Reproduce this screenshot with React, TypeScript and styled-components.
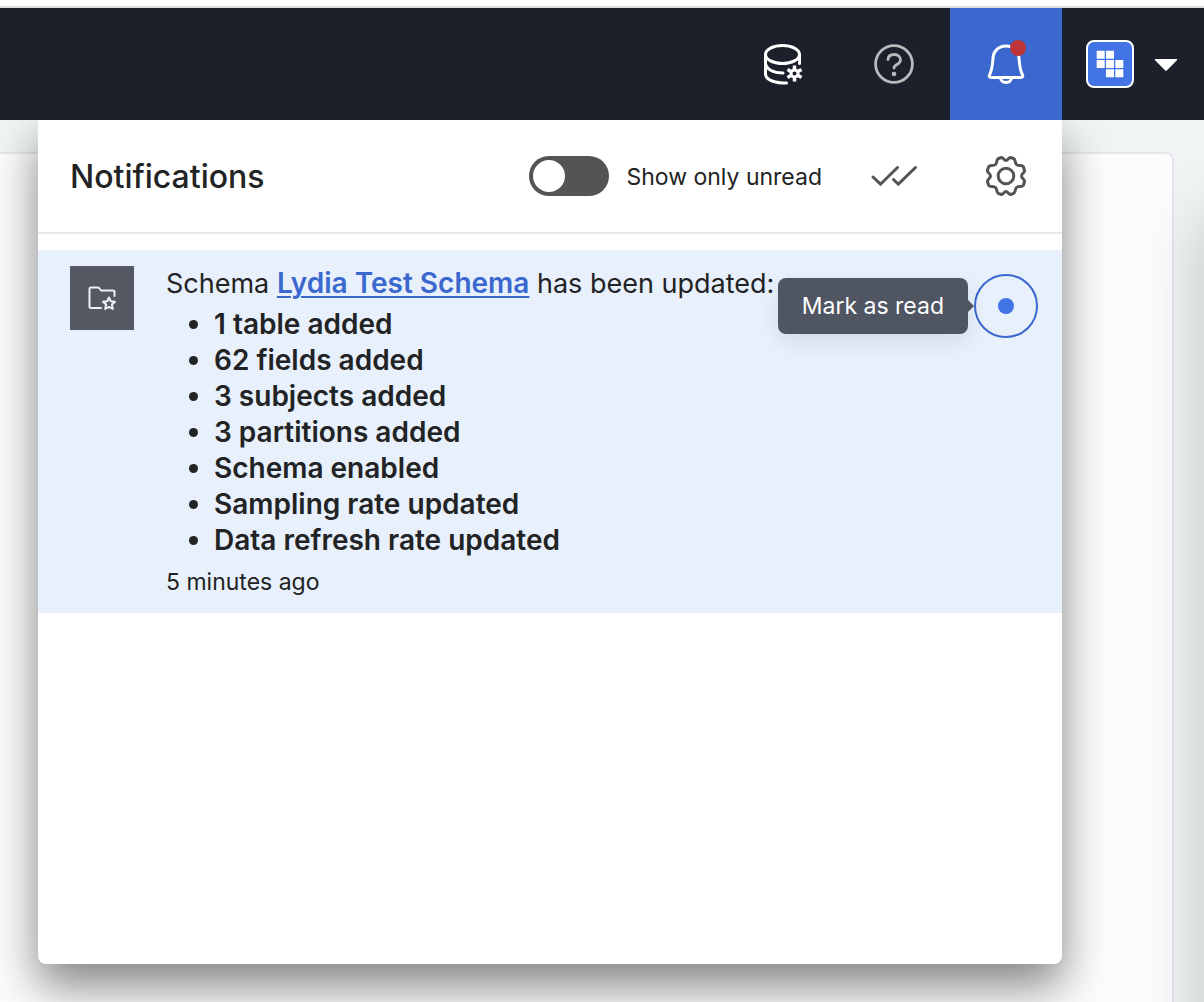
import React, { useState } from "react";
import styled, { createGlobalStyle, css } from "styled-components";

const GlobalStyle = createGlobalStyle`
  *, *::before, *::after { box-sizing: border-box; }
  html, body, #root { height: 100%; }
  body {
    margin: 0;
    overflow: hidden;
    background: #f0f4f5;
    color: #222324;
    font-family: Inter, "Liberation Sans", sans-serif;
  }
  button { font: inherit; border: 0; padding: 0; background: none; color: inherit; cursor: pointer; }
`;

const Page = styled.div`
  display: flex;
  flex-direction: column;
  height: 100%;
  border-top: 6px solid #ffffff;
`;

const TopBar = styled.header`
  position: relative;
  z-index: 2;
  display: flex;
  justify-content: flex-end;
  height: 114px;
  flex: none;
  border-top: 2px solid #dde2df;
  background: #1c202a;
`;

const NavButton = styled.button<{ $active?: boolean; $muted?: boolean }>`
  position: relative;
  display: grid;
  place-items: center;
  width: 112px;
  color: ${(p) => (p.$muted ? "#b9babd" : "#ffffff")};
  ${(p) => p.$active && css`background: #3b68ce;`}
`;

const Badge = styled.span`
  position: absolute;
  top: 32px;
  right: 36px;
  width: 16px;
  height: 16px;
  border-radius: 50%;
  background: #bf3438;
`;

const AccountButton = styled.button`
  display: flex;
  align-items: center;
  gap: 20px;
  padding: 0 26px 0 24px;
`;

const Logo = styled.span`
  display: grid;
  place-items: center;
  width: 48px;
  height: 48px;
  border: 2px solid #ffffff;
  border-radius: 8px;
  background: #4274e6;
`;

const Content = styled.main`
  position: relative;
  flex: 1;
  display: flex;
  padding: 32px 30px 0 0;
  overflow: hidden;

  &::before {
    content: "";
    position: absolute;
    top: 100px;
    bottom: -100px;
    left: 100%;
    width: 200px;
    box-shadow: 0 0 64px rgba(0, 0, 0, 0.2);
    pointer-events: none;
  }
`;

const Sheet = styled.section`
  flex: 1;
  border: 2px solid #e5e5ee;
  border-width: 2px 2px 0 0;
  border-radius: 0 8px 0 0;
  background: #fcfcfc;
`;

const Panel = styled.section`
  position: absolute;
  top: 0;
  right: 142px;
  left: 38px;
  bottom: 38px;
  border-radius: 0 0 8px 8px;
  background: #ffffff;
  box-shadow: 0 22px 46px rgba(0, 0, 0, 0.48);
`;

const PanelHeader = styled.header`
  display: flex;
  align-items: center;
  height: 114px;
  padding: 0 36px 0 32px;
  border-bottom: 2px solid #e7e7ee;
`;

const Title = styled.h2`
  flex: 1;
  margin: 0;
  padding-top: 2px;
  font-size: 32px;
  font-weight: 500;
  line-height: 40px;
`;

const ToggleLabel = styled.label`
  display: flex;
  align-items: center;
  gap: 17px;
  font-size: 23px;
  line-height: 32px;
  cursor: pointer;
`;

const ToggleText = styled.span`
  padding-top: 2px;
`;

const Toggle = styled.input`
  appearance: none;
  width: 80px;
  height: 40px;
  margin: 0;
  padding: 4px;
  border-radius: 20px;
  background: #545454;
  cursor: pointer;

  &::before {
    content: "";
    display: block;
    width: 32px;
    height: 32px;
    border-radius: 50%;
    background: #ffffff;
  }
  &:checked { background: #3b68ce; }
  &:checked::before { margin-left: 40px; }
`;

const Actions = styled.div`
  display: flex;
  gap: 68px;
  margin-left: 48px;
  color: #545454;
`;

const IconButton = styled.button`
  display: grid;
  place-items: center;
`;

const Item = styled.article`
  display: flex;
  align-items: flex-start;
  gap: 32px;
  margin-top: 16px;
  padding: 16px 24px 15px 32px;
  background: #e8f0fb;
`;

const Thumb = styled.div`
  display: grid;
  place-items: center;
  flex: none;
  width: 64px;
  height: 64px;
  background: #535862;
  color: #f0f1f3;
`;

const Body = styled.div`
  flex: 1;
  line-height: 36px;
`;

const Message = styled.p`
  margin: 0;
  font-size: 27px;
  white-space: nowrap;
`;

const SchemaLink = styled.a`
  color: #3b68ce;
  font-size: 28px;
  font-weight: 600;
  line-height: 28px;
  text-decoration-thickness: 2px;
  text-underline-offset: 3px;
  text-decoration-skip-ink: auto;
`;

const Changes = styled.ul`
  margin: 4px 0 8px;
  padding-left: 48px;
  font-size: 28px;
  font-weight: 600;
`;

const Time = styled.time`
  display: block;
  font-size: 23px;
  line-height: 32px;
`;

const ReadControl = styled.div`
  position: relative;
  flex: none;
  margin-top: 8px;
`;

const ReadButton = styled.button`
  display: grid;
  place-items: center;
  width: 64px;
  height: 64px;
  border: 2px solid #3b68ce;
  border-radius: 50%;

  &::before {
    content: "";
    width: 16px;
    height: 16px;
    border-radius: 50%;
    background: #4274e6;
  }
`;

const Tooltip = styled.span`
  position: absolute;
  top: 4px;
  right: 70px;
  padding: 12px 24px;
  border-radius: 8px;
  background: #505562;
  box-shadow: 0 8px 20px rgba(40, 50, 70, 0.1);
  color: #ffffff;
  font-size: 23px;
  line-height: 32px;
  white-space: nowrap;

  &::after {
    content: "";
    position: absolute;
    top: 22px;
    left: 100%;
    border: 6px solid transparent;
    border-left-color: #505562;
    border-right: 0;
  }
`;

const DatabaseIcon = () => (
  <svg width="40" height="42" viewBox="-2 0 40 42" overflow="visible" fill="none" stroke="currentColor" strokeWidth="3" strokeLinecap="round" aria-hidden="true">
    <ellipse cx="18.500" cy="11.500" rx="17" ry="9" />
    <path d="M1.500 11.500V31c0 5 7 8.500 17 9h4M1.500 20.500c1 6 8 9.500 17.500 9.500M35.500 11.500v9" />
    <g strokeLinecap="butt" strokeWidth="3.500">
      <path d="M30.500 22.500v16M23.500 26.500l14 8M37.500 26.500l-14 8" />
    </g>
    <circle cx="30.500" cy="30.500" r="3.500" fill="#1c202a" strokeWidth="3" />
  </svg>
);

const HelpIcon = () => (
  <svg width="40" height="40" viewBox="0 0 40 40" fill="none" stroke="currentColor" strokeWidth="2.800" strokeLinecap="round" aria-hidden="true">
    <circle cx="20" cy="20" r="18.400" />
    <path d="M14 15.500c.200-3.500 3-5 6.200-5 3.600 0 6.300 2.200 6.300 5.500 0 4.800-6.500 4.200-6.500 8" />
    <circle cx="20" cy="30" r="2.300" fill="currentColor" stroke="none" />
  </svg>
);

const BellIcon = () => (
  <svg width="40" height="40" viewBox="0 0 40 40" fill="none" stroke="currentColor" strokeWidth="3" strokeLinejoin="round" aria-hidden="true">
    <path d="M20 2C12.500 2 7.500 7 7 14c-.500 9-1.500 13-3.500 17-.600 1.500 0 2.500 1.500 2.500h30c1.500 0 2.100-1 1.500-2.500-2-4-3-8-3.500-17C32.500 7 27.500 2 20 2Z" />
    <path d="M14.500 33.500c0 3 2.300 5 5.500 5s5.500-2 5.500-5" />
  </svg>
);

const LogoMark = () => (
  <svg width="28" height="28" viewBox="0 0 28 28" fill="#ffffff" aria-hidden="true">
    <path d="M.7.700h8v8h-8zM10 .700h8v8h-8zM.700 10h8v8h-8zM10 10h8v8h-8zM19.300 10h8v8h-8zM10 19.300h8v8h-8zM19.300 19.300h8v8h-8z" />
  </svg>
);

const CaretIcon = () => (
  <svg width="24" height="14" viewBox="0 0 24 14" fill="#ffffff" aria-hidden="true">
    <path d="M1.500 2h21c.800 0 1 .700.400 1.300L12.800 13.400c-.500.500-1.100.500-1.600 0L1.100 3.300C.500 2.700.700 2 1.500 2Z" />
  </svg>
);

const DoubleCheckIcon = () => (
  <svg width="48" height="24" viewBox="0 0 48 24" fill="none" stroke="currentColor" strokeWidth="3" strokeLinecap="round" aria-hidden="true">
    <path d="M3 13l7.500 7.200L27.500 3.500M23.500 15.500l4.800 4.700L45.500 3.500" />
  </svg>
);

const GearIcon = () => (
  <svg width="40" height="40" viewBox="-20 -20 40 40" fill="none" stroke="currentColor" strokeWidth="3" strokeLinejoin="round" aria-hidden="true">
    <circle r="7.800" />
    <path d="M0-15.500 C2-15.500 2.500-18.500 4.500-18.500 L7.500-17.500 C10-16.500 8.500-13.500 10.500-11.500 C12.500-9.500 16.500-11.500 17.500-9 L18.500-5.500 C19-3.500 15.500-2.500 15.500 0 C15.500 2.500 19 3.500 18.500 5.500 L17.500 9 C16.500 11.500 12.500 9.500 10.500 11.500 C8.500 13.500 10 16.500 7.500 17.500 L4.500 18.500 C2.500 18.500 2 15.500 0 15.500 C-2 15.500-2.500 18.500-4.500 18.500 L-7.500 17.500 C-10 16.500-8.500 13.500-10.500 11.500 C-12.500 9.500-16.500 11.500-17.500 9 L-18.500 5.500 C-19 3.500-15.500 2.500-15.500 0 C-15.500-2.500-19-3.500-18.500-5.500 L-17.500-9 C-16.500-11.500-12.500-9.500-10.500-11.500 C-8.500-13.500-10-16.500-7.500-17.500 L-4.500-18.500 C-2.500-18.500-2-15.500 0-15.500Z" />
  </svg>
);

const FolderStarIcon = () => (
  <svg width="28" height="24" viewBox="0 0 28 24" fill="none" stroke="currentColor" strokeWidth="2" strokeLinejoin="round" strokeLinecap="round" aria-hidden="true">
    <path d="M13 22H3c-1 0-1.500-.500-1.500-1.500V3c0-1 .500-1.500 1.500-1.500h6.500c1 0 1.500.300 2 1l1.500 2h12c1 0 1.500.500 1.500 1.500v4" />
    <path d="M21 11.500l1.800 3.700 4.200.500-3.100 2.900.900 4.400-3.800-2.200-3.800 2.200.900-4.400L15 15.700l4.200-.500z" />
  </svg>
);

const changes = [
  "1 table added",
  "62 fields added",
  "3 subjects added",
  "3 partitions added",
  "Schema enabled",
  "Sampling rate updated",
  "Data refresh rate updated",
];

export default function App() {
  const [unreadOnly, setUnreadOnly] = useState(false);

  return (
    <>
      <GlobalStyle />
      <Page>
        <TopBar>
          <NavButton aria-label="Data settings"><DatabaseIcon /></NavButton>
          <NavButton $muted aria-label="Help"><HelpIcon /></NavButton>
          <NavButton $active aria-label="Notifications">
            <BellIcon />
            <Badge />
          </NavButton>
          <AccountButton aria-label="Account menu">
            <Logo><LogoMark /></Logo>
            <CaretIcon />
          </AccountButton>
        </TopBar>
        <Content>
          <Sheet />
          <Panel>
            <PanelHeader>
              <Title>Notifications</Title>
              <ToggleLabel htmlFor="unread-only">
                <Toggle
                  id="unread-only"
                  type="checkbox"
                  role="switch"
                  checked={unreadOnly}
                  onChange={(e) => setUnreadOnly(e.target.checked)}
                />
                <ToggleText>Show only unread</ToggleText>
              </ToggleLabel>
              <Actions>
                <IconButton aria-label="Mark all as read"><DoubleCheckIcon /></IconButton>
                <IconButton aria-label="Notification settings"><GearIcon /></IconButton>
              </Actions>
            </PanelHeader>
            <Item>
              <Thumb><FolderStarIcon /></Thumb>
              <Body>
                <Message>
                  Schema <SchemaLink href="#schema">Lydia Test Schema</SchemaLink> has been updated:
                </Message>
                <Changes>
                  {changes.map((change) => <li key={change}>{change}</li>)}
                </Changes>
                <Time>5 minutes ago</Time>
              </Body>
              <ReadControl>
                <ReadButton aria-labelledby="read-tip" />
                <Tooltip id="read-tip" role="tooltip">Mark as read</Tooltip>
              </ReadControl>
            </Item>
          </Panel>
        </Content>
      </Page>
    </>
  );
}
